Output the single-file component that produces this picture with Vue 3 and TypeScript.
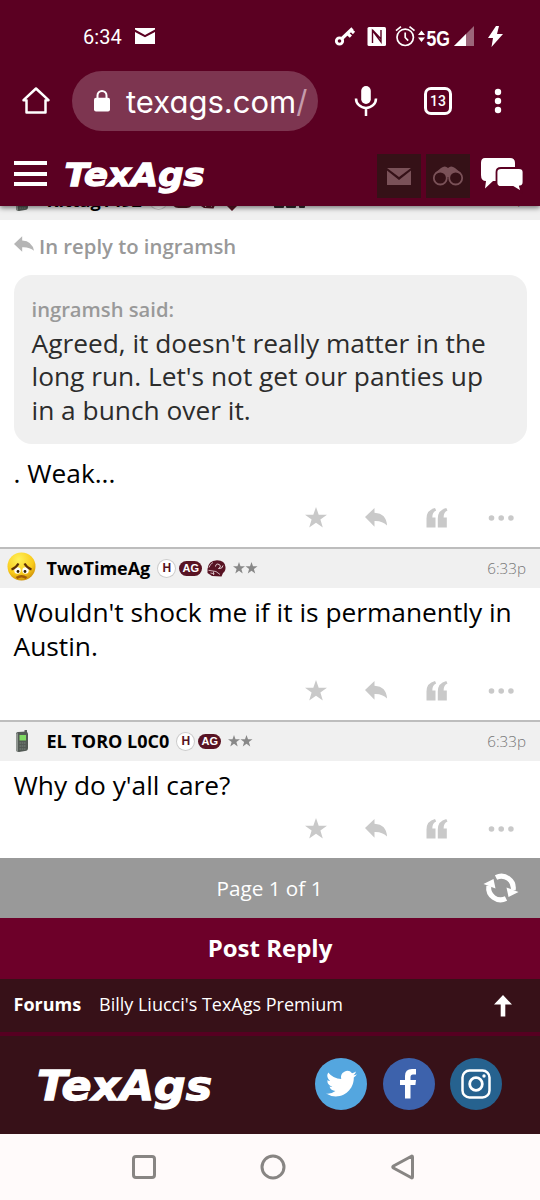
<script setup lang="ts">
interface Post {
  id: number
  name: string
  time: string
  avatar: 'sad' | 'phone'
  helmet: boolean
  heart: boolean
  lines: string[]
  kind: string
}

const posts: Post[] = [
  { id: 1, name: 'Kittag1492', time: '6:32p', avatar: 'phone', helmet: true, heart: true, lines: ['. Weak...'], kind: 'first' },
  { id: 2, name: 'TwoTimeAg', time: '6:33p', avatar: 'sad', helmet: true, heart: false, lines: ["Wouldn't shock me if it is permanently in", 'Austin.'], kind: 'second' },
  { id: 3, name: 'EL TORO L0C0', time: '6:33p', avatar: 'phone', helmet: false, heart: false, lines: ["Why do y'all care?"], kind: 'third' },
]
const quoteLines: string[] = [
  "Agreed, it doesn't really matter in the",
  "long run. Let's not get our panties up",
  'in a bunch over it.',
]
</script>

<template>
  <div class="screen">
    <header class="top">
      <div class="status">
        <span class="clock">6:34</span>
        <svg class="mail" width="20" height="16" viewBox="0 0 20 16"><path d="M0 0H20V1.5L10 7 0 1.5Z M0 4 10 9.3 20 4V16H0Z" fill="#fff" /></svg>
        <svg class="sys" width="170" height="26" viewBox="0 0 170 26" fill="#fff">
          <g fill="none" stroke="#fff">
            <circle cx="4.5" cy="17" r="3.2" stroke-width="2.8" />
            <path d="M7 14.5 17.5 4.5M12.5 9.5l3.4 3.2M16 6.2l3 2.8" stroke-width="3.2" />
          </g>
          <rect x="32.5" y="3" width="18.5" height="19" rx="1.5" />
          <path d="M37.5 19V6.5L46 17.800V6M37.500 6l8.500 9" fill="none" stroke="#5b0022" stroke-width="1.4" />
          <g fill="none" stroke="#fff">
            <circle cx="70.2" cy="13.3" r="8.2" stroke-width="1.7" />
            <path d="M70.2 8.5v5l3 3.2M61 6.7l5-4M79.5 6.7l-5-4" stroke-width="1.7" />
          </g>
          <path d="M83 11 86.5 6.5 90 11ZM83 13.5H90L86.5 18Z" />
          <text x="91.5" y="22" font-size="21.5" font-weight="700" textLength="23.5" lengthAdjust="spacingAndGlyphs" class="net">5G</text>
          <path d="M119 22 139 2V22Z" opacity=".4" />
          <path d="M119 22 131 10V22Z" />
          <path d="M161 2 153 14h5l-1.5 9L168 10h-6l2-8Z" />
        </svg>
      </div>
      <div class="browser">
        <svg class="home" width="30" height="30" viewBox="0 0 30 30" fill="none" stroke="#fff" stroke-width="2.5" stroke-linejoin="round"><path d="M2.5 14.2 15 2.5 27.5 14.2H24.5V26.5H5.5V14.2Z" /></svg>
        <div class="address">
          <svg width="18" height="22" viewBox="0 0 18 22"><path d="M4.5 9V5.5a4.5 4.5 0 0 1 9 0V9" fill="none" stroke="#fff" stroke-width="2" /><rect x="1" y="7.7" width="16" height="13.8" rx="2" fill="#fff" /></svg>
          <span class="url">texags.com<span class="slash">/</span></span>
        </div>
        <svg class="mic" width="24" height="32" viewBox="0 0 24 32" fill="none" stroke="#fff"><rect x="7.2" y="1" width="9.6" height="18" rx="4.8" fill="#fff" stroke="none" /><path d="M2 13.5a10 9.5 0 0 0 20 0M12 23v8" stroke-width="2.5" /></svg>
        <div class="tabs">13</div>
        <svg class="more" width="8" height="26" viewBox="0 0 8 26" fill="#fff"><circle cx="4" cy="4" r="3.2" /><circle cx="4" cy="13" r="3.2" /><circle cx="4" cy="22" r="3.2" /></svg>
      </div>
      <div class="site">
        <div class="burger"><i></i><i></i><i></i></div>
        <svg class="logo" width="146" height="38" viewBox="0 0 146 38"><text x="1.5" y="28" font-size="32.5" textLength="140" lengthAdjust="spacingAndGlyphs">TexAgs</text></svg>
        <div class="tile"><svg width="24" height="17" viewBox="0 0 24 17"><path d="M0 0H24L12 9ZM0 2.5 12 12 24 2.5V17H0Z" fill="#7a5158" /></svg></div>
        <div class="tile">
          <svg width="32" height="20" viewBox="0 0 32 20"><path d="M3 7 9 2q4-3 7 0 3-3 7 0l6 5-4 4H7Z" fill="#7a5158" /><circle cx="8.3" cy="12" r="6.5" fill="#351117" stroke="#7a5158" stroke-width="1.8" /><circle cx="23.7" cy="12" r="6.5" fill="#351117" stroke="#7a5158" stroke-width="1.8" /></svg>
        </div>
        <svg class="chat" width="44" height="36" viewBox="0 0 44 36" fill="#fff">
          <path d="M5 1H30Q35 1 35 6V20Q35 24 31 24H13L5 31.5 6 24Q1 24 1 18V6Q1 1 5 1Z" />
          <path d="M21 11H39Q43.5 11 43.5 15V25Q43.5 29 40 29.5L41.5 35 33 30H21Q16.5 30 16.5 26V15Q16.5 11 21 11Z" stroke="#5b0022" stroke-width="1.8" />
        </svg>
      </div>
    </header>

    <main>
      <article v-for="post in posts" :key="post.id" :class="['post', post.kind]">
        <div class="post-head">
          <div class="avatar">
            <svg v-if="post.avatar === 'sad'" width="30" height="30" viewBox="0 0 30 30">
              <defs><radialGradient id="face" cx=".4" cy=".25" r=".8"><stop offset="0" stop-color="#fff25a" /><stop offset=".65" stop-color="#f9ca1b" /><stop offset="1" stop-color="#c98a08" /></radialGradient></defs>
              <circle cx="14.5" cy="13.5" r="14" fill="url(#face)" />
              <ellipse cx="10.5" cy="17.5" rx="3.2" ry="3.2" fill="#fff" /><ellipse cx="18.5" cy="17.5" rx="3.2" ry="3.2" fill="#fff" />
              <circle cx="11" cy="18.5" r="1.4" fill="#332000" /><circle cx="18" cy="18.500" r="1.4" fill="#332000" />
              <path d="M4.5 16.5Q9 15 11.5 10.5M24.5 16.5Q20 15 17.5 10.5" fill="none" stroke="#5f3005" stroke-width="2.2" />
              <path d="M9.5 25Q14.5 21.5 19.5 25" fill="none" stroke="#a05c08" stroke-width="2.5" />
            </svg>
            <svg v-else width="16" height="24" viewBox="0 0 16 24">
              <path d="M10.5 1h2.5v5h-2.5Z" fill="#5c615d" /><path d="M2 5Q2 3 4 3L12 2.5Q14 3 14 5V19Q14 22 11 22L5 23Q2 23 2 20Z" fill="#535a55" /><path d="M2 5v15q0 3 2 3V4Z" fill="#8e948f" />
              <rect x="5.5" y="6" width="6.5" height="5.5" fill="#7fd962" /><path d="M5.5 14h6M5.5 17h6M5.5 20h6" stroke="#7b837d" stroke-width="1.2" stroke-dasharray="1.6 .6" />
            </svg>
          </div>
          <strong>{{ post.name }}</strong>
          <span class="h">H</span>
          <span class="ag">AG</span>
          <svg v-if="post.helmet" class="helmet" width="19" height="17" viewBox="0 0 19 17">
            <path d="M.5 9Q1 1 10 .3 18 .5 18.5 7q.3 4-2.500 6l-1.500 3.500L5 16 .5 13Z" fill="#581323" />
            <path d="M8.5 6.5Q9 3 12 4.500t-.5 4q4 .5 4.500-3" fill="none" stroke="#e6d5d9" stroke-width="1" />
            <path d="M1.5 10.3 9 11.5 13 14.5M3.5 13l4 .8M6.5 11.5v3.500M2 7.500Q3 4 6 2.500" fill="none" stroke="#d9c2c8" stroke-width=".9" />
          </svg>
          <svg v-if="post.heart" class="heart" width="16" height="17" viewBox="0 0 16 17"><path d="M8 17 0 9Q1 0 8 4 15 0 16 9Z" fill="#581323" /></svg>
          <svg v-if="post.heart" class="flags" width="34" height="16" viewBox="0 0 34 16" fill="#302a2c"><rect width="10" height="16" rx="1" /><rect x="12" width="10" height="16" rx="1" /><rect x="25" width="6" height="16" rx="1" /></svg>
          <svg v-else class="stars" width="25" height="12" viewBox="0 0 25 12" fill="#888"><path id="s" d="M6 0 7.5 4.3H12L8.4 7 9.7 11.5 6 8.8 2.3 11.5 3.6 7 0 4.3H4.5Z" /><use href="#s" x="12.5" /></svg>
          <time>{{ post.time }}</time>
        </div>
        <template v-if="post.id === 1">
          <div class="reply-to">
            <svg width="20" height="17" viewBox="0 0 22 18"><path d="M0 8.5 9 0V4.5Q20 5 22 16 17 11.5 9 12V17Z" fill="#b5b5b5" /></svg>
            <span>In reply to ingramsh</span>
          </div>
          <blockquote>
            <cite>ingramsh said:</cite>
            <p v-for="line in quoteLines" :key="line">{{ line }}</p>
          </blockquote>
        </template>
        <div class="body"><p v-for="line in post.lines" :key="line">{{ line }}</p></div>
        <div class="actions">
          <span><svg width="22" height="21" viewBox="0 0 22 21"><path d="M11 0 13.7 7.7H22L15.4 12.5 17.8 20.5 11 15.7 4.2 20.5 6.6 12.5 0 7.7H8.3Z" /></svg></span>
          <span><svg width="22" height="19" viewBox="0 0 22 19"><path d="M0 9 9.5 0V4.7Q21.5 5.5 22 17.5 17 12.5 9.5 13V18.7Z" /></svg></span>
          <span><svg width="22" height="20" viewBox="0 0 22 20"><path id="q" d="M9 0 10.200 2.500Q6.300 4 6.300 9.500H9.500V19.500H.5V10.500Q.5 2 9 0Z" /><use href="#q" x="11.3" /></svg></span>
          <span><svg width="26" height="6" viewBox="0 0 26 6"><circle cx="3.5" cy="3" r="2.8" /><circle cx="13.2" cy="3" r="2.8" /><circle cx="22.9" cy="3" r="2.8" /></svg></span>
        </div>
      </article>
    </main>

    <div class="pager">
      <span>Page 1 of 1</span>
      <svg width="36" height="30" viewBox="0 0 36 30">
        <g id="turn"><path d="M13 4.5A12 12 0 0 1 30.2 17" fill="none" stroke="#fff" stroke-width="5" /><path d="M23.5 14.5 35.5 19 25.5 24Z" fill="#fff" /></g>
        <use href="#turn" transform="rotate(180 18 15)" />
      </svg>
    </div>
    <div class="post-reply">Post Reply</div>
    <nav class="crumbs">
      <b>Forums</b><span>Billy Liucci's TexAgs Premium</span>
      <svg width="18" height="22" viewBox="0 0 18 22"><path d="M9 0 18 9.5H11.3V21.5H6.7V9.5H0Z" fill="#fff" /></svg>
    </nav>
    <footer>
      <svg class="logo big" width="182" height="46" viewBox="0 0 182 46"><text x="1" y="33" font-size="40" textLength="175" lengthAdjust="spacingAndGlyphs">TexAgs</text></svg>
      <div class="social twitter"><svg width="31" height="26" viewBox="0 0 24 20"><path d="M24 2.4a9.8 9.8 0 0 1-2.8.8A5 5 0 0 0 23.3.4a9.9 9.9 0 0 1-3.1 1.2 4.9 4.9 0 0 0-8.4 4.5A14 14 0 0 1 1.7 1a4.9 4.9 0 0 0 1.5 6.6A4.9 4.9 0 0 1 1 7v.1a4.9 4.9 0 0 0 3.9 4.8 5 5 0 0 1-2.2.1 4.9 4.9 0 0 0 4.6 3.4A9.9 9.9 0 0 1 0 17.4a14 14 0 0 0 7.5 2.2c9.1 0 14.3-7.7 14-14.6A10 10 0 0 0 24 2.4Z" fill="#fff" /></svg></div>
      <div class="social facebook"><svg width="17" height="30" viewBox="0 0 17 30"><path d="M16 0V5.5H13Q10.5 5.5 10.5 8V11H16L15.4 16H10.5V29.5H5V16H0V11H5V7Q5 0 12 0Z" fill="#fff" /></svg></div>
      <div class="social instagram"><svg width="30" height="30" viewBox="0 0 30 30" fill="none" stroke="#fff" stroke-width="2.5"><rect x="1.5" y="1.5" width="27" height="27" rx="7" /><circle cx="15" cy="15" r="6.3" stroke-width="2.8" /><circle cx="23" cy="7" r="1.7" fill="#fff" stroke="none" /></svg></div>
    </footer>
    <div class="system-nav">
      <svg width="26" height="26" viewBox="0 0 26 26"><rect x="2.5" y="2.5" width="21" height="21" rx="2.5" /></svg>
      <svg width="26" height="26" viewBox="0 0 26 26"><circle cx="13" cy="13" r="11" /></svg>
      <svg width="26" height="26" viewBox="0 0 26 26"><path d="M23.5 3V23Q23.5 24.5 22 23.5L4.5 14Q3 13 4.5 12L22 2.5Q23.5 1.5 23.5 3Z" /></svg>
    </div>
  </div>
</template>

<style>
body { margin: 0; background: #fff; }
</style>
<style scoped>
* { box-sizing: border-box; }
p { margin: 0; }
svg { display: block; flex: none; overflow: visible; }
.screen { width: 540px; height: 1200px; overflow: hidden; background: #fff; color: #111; font-family: "Open Sans", "Noto Sans", sans-serif; white-space: nowrap; }
.top { height: 206px; background: #5b0022; color: #fff; position: relative; z-index: 2; box-shadow: 0 2px 5px rgba(0, 0, 0, .5); }
.status { height: 71px; display: flex; padding: 0 0 0 83px; }
.clock { font: 400 20px/24px Roboto, sans-serif; width: 52px; margin-top: 25px; letter-spacing: .1px; }
.mail { margin-top: 28px; }
.sys { margin: 24px 0 0 180px; }
.net { font-family: "Liberation Sans", sans-serif; }
.browser { height: 60px; display: flex; align-items: center; }
.home { margin-left: 21px; }
.address { width: 246px; height: 60px; margin-left: 21px; border-radius: 30px; background: #7d3550; display: flex; align-items: center; padding-left: 21px; }
.url { font: 400 31px/60px Inter, sans-serif; font-feature-settings: "cv11"; margin: 2px 0 0 15px; }
.slash { color: #c59bab; }
.mic { margin-left: 36px; }
.tabs { width: 28px; height: 28px; margin-left: 46px; border: 3px solid #fff; border-radius: 7px; font: 500 14px/22px Roboto, sans-serif; text-align: center; }
.more { margin-left: 42px; }
.site { height: 75px; display: flex; padding-left: 14px; }
.burger { width: 33px; height: 25px; margin-top: 30px; display: flex; flex-direction: column; justify-content: space-between; }
.burger i { height: 4px; background: #fff; }
.logo { margin: 27px 0 0 16px; }
.logo text { font-family: "DejaVu Sans", sans-serif; font-weight: 700; font-style: italic; fill: #fff; stroke: #fff; stroke-width: 1.3; }
.tile { width: 44px; height: 44px; margin: 23px 5px 0 0; background: #351117; display: flex; align-items: center; justify-content: center; }
.logo + .tile { margin-left: 168px; }
.chat { margin: 26px 0 0 5px; }

.post-head { height: 41px; border-top: 2px solid #bdbdbd; background: #f0f0f0; display: flex; align-items: center; padding: 0 14px 1px 0; }
.avatar { width: 46.5px; padding-right: 3px; display: flex; justify-content: center; }
.post-head strong { font-size: 18px; color: #000; }
.h { width: 17px; height: 17px; margin-left: 8px; border-radius: 50%; background: #fff; box-shadow: 0 0 0 1px #ccc; color: #581323; font: 700 12px/17px "Liberation Sans", sans-serif; text-align: center; }
.ag { width: 23px; height: 15px; margin-left: 4px; border-radius: 7.5px; background: #581323; color: #fff; font: 700 11px/15px "Liberation Sans", sans-serif; text-align: center; }
.helmet { margin-left: 5px; }
.heart { margin: 5px 0 0 6px; }
.flags { margin-left: 34px; }
.stars { margin-left: 6.5px; }
time { margin-left: auto; font-size: 15.2px; font-weight: 300; color: #777; }
.first .post-head { margin-top: -27px; }
.first time { margin-top: -5px; }
.reply-to { height: 55px; padding-left: 14px; display: flex; color: #999; font-size: 20.3px; font-weight: 600; line-height: 27px; }
.reply-to svg { margin-top: 16px; }
.reply-to span { margin: 13px 0 0 5px; }
blockquote { margin: 0 13.5px; height: 169px; padding: 21px 18px 0; border-radius: 18px; background: #f0f0f0; color: #2c2c2c; font-size: 26.3px; line-height: 33.7px; }
cite { display: block; height: 30.5px; color: #999; font-size: 20.2px; line-height: 27px; font-weight: 600; font-style: normal; }
.body { padding: 8px 13.5px 0; font-size: 26.3px; line-height: 33.7px; color: #000; }
.first .body { height: 55px; padding-top: 13px; }
.second .body { height: 84px; }
.third .body { height: 49px; }
.actions { display: flex; padding-left: 285.5px; height: 48px; fill: #c9c9c9; }
.actions span { width: 60.6px; height: 37px; display: flex; align-items: center; justify-content: center; }
.actions span:last-child { width: 68px; }

.pager { height: 60px; background: #999; color: #fff; display: flex; align-items: center; font-size: 20.7px; }
.pager span { width: 106px; margin-left: 216.5px; }
.pager svg { margin-left: 160px; }
.post-reply { height: 61px; background: #6d0029; color: #fff; text-align: center; font-size: 24px; font-weight: 700; line-height: 60px; }
.crumbs { height: 57px; border-bottom: 4px solid #560021; background: #371118; color: #fff; display: flex; padding: 12px 0 0 13.5px; font-size: 18px; line-height: 26px; }
.crumbs b { width: 85.5px; }
.crumbs span { width: 394.5px; font-weight: 400; }
.crumbs svg { margin-top: 4px; }
footer { height: 98px; background: #371118; display: flex; }
.big { margin: 31px 97px 0 36px; }
.social { width: 52px; height: 52px; margin: 22px 15.5px 0 0; border-radius: 50%; display: flex; align-items: center; justify-content: center; }
.twitter { background: #54a6df; }
.facebook { background: #3d62ac; }
.instagram { background: #26628f; }
.system-nav { height: 67px; background: #fffafa; display: flex; gap: 103px; padding: 20px 0 0 131px; fill: none; stroke: #888583; stroke-width: 3; }
</style>
